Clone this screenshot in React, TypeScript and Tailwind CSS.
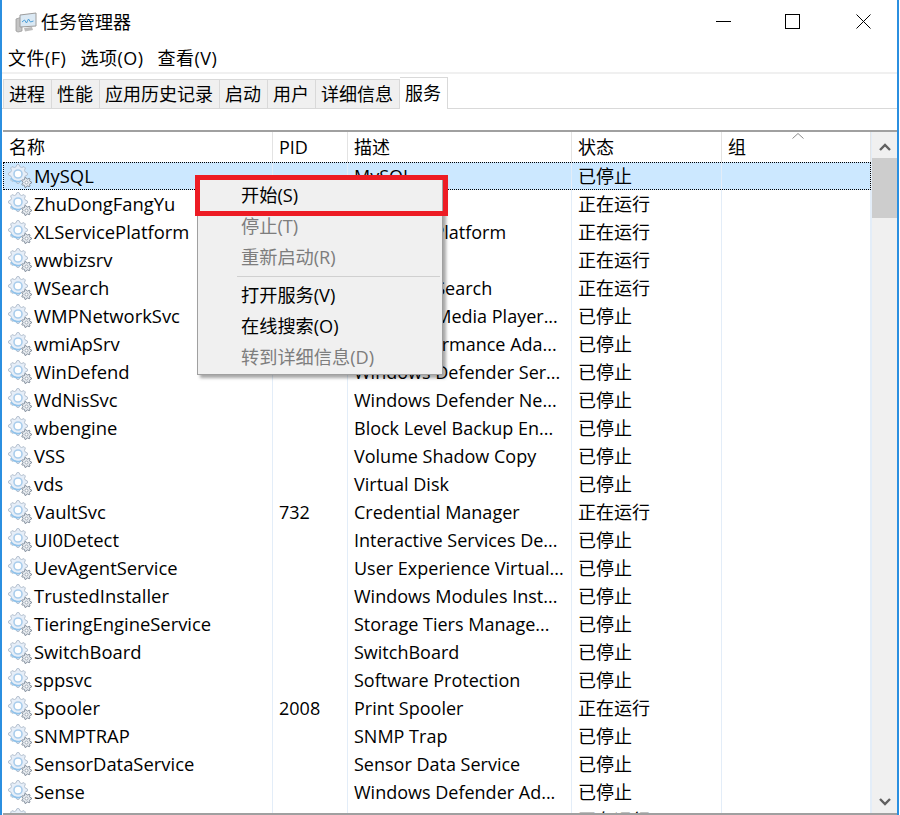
const font = "font-['Open_Sans','Noto_Sans_CJK_SC',sans-serif]"

type Row = {
  name: string
  pid?: string
  desc: string
  status: string
}

const STOPPED = "已停止"
const RUNNING = "正在运行"

const rows: Row[] = [
  { name: "MySQL", desc: "MySQL", status: STOPPED },
  { name: "ZhuDongFangYu", desc: "", status: RUNNING },
  { name: "XLServicePlatform", desc: "XLServicePlatform", status: RUNNING },
  { name: "wwbizsrv", desc: "", status: RUNNING },
  { name: "WSearch", desc: "Windows Search", status: RUNNING },
  { name: "WMPNetworkSvc", desc: "Windows Media Player...", status: STOPPED },
  { name: "wmiApSrv", desc: "WMI Performance Ada...", status: STOPPED },
  { name: "WinDefend", desc: "Windows Defender Ser...", status: STOPPED },
  { name: "WdNisSvc", desc: "Windows Defender Ne...", status: STOPPED },
  { name: "wbengine", desc: "Block Level Backup En...", status: STOPPED },
  { name: "VSS", desc: "Volume Shadow Copy", status: STOPPED },
  { name: "vds", desc: "Virtual Disk", status: STOPPED },
  { name: "VaultSvc", pid: "732", desc: "Credential Manager", status: RUNNING },
  { name: "UI0Detect", desc: "Interactive Services De...", status: STOPPED },
  { name: "UevAgentService", desc: "User Experience Virtual...", status: STOPPED },
  { name: "TrustedInstaller", desc: "Windows Modules Inst...", status: STOPPED },
  { name: "TieringEngineService", desc: "Storage Tiers Manage...", status: STOPPED },
  { name: "SwitchBoard", desc: "SwitchBoard", status: STOPPED },
  { name: "sppsvc", desc: "Software Protection", status: STOPPED },
  { name: "Spooler", pid: "2008", desc: "Print Spooler", status: RUNNING },
  { name: "SNMPTRAP", desc: "SNMP Trap", status: STOPPED },
  { name: "SensorDataService", desc: "Sensor Data Service", status: STOPPED },
  { name: "Sense", desc: "Windows Defender Ad...", status: STOPPED },
  { name: "sens", pid: "3340", desc: "System Event Notificat...", status: RUNNING },
]

const tabs = ["进程", "性能", "应用历史记录", "启动", "用户", "详细信息"]

// outline of a cog: alternating outer and inner radius
function gearPath(cx: number, cy: number, outer: number, inner: number, teeth: number) {
  const points: string[] = []
  const steps = teeth * 4
  for (let i = 0; i < steps; i++) {
    const r = i % 4 < 2 ? outer : inner
    const a = ((i - 0.5) / steps) * Math.PI * 2
    points.push(`${(cx + r * Math.cos(a)).toFixed(2)} ${(cy + r * Math.sin(a)).toFixed(2)}`)
  }
  return `M${points.join("L")}Z`
}

function GearIcon() {
  return (
    <svg viewBox="0 0 24 24" className="h-6 w-6 shrink-0">
      <path d={gearPath(10, 10, 9.5, 7.4, 8)} fill="#e6eef8" stroke="#b4c0cf" strokeWidth="1" />
      <circle cx="10" cy="10" r="4" fill="#ffffff" stroke="#a9cdec" strokeWidth="1.6" />
      <path d="M3 14a9 9 0 0 0 10 3" fill="none" stroke="#8fc2ea" strokeWidth="1.6" />
      <path d={gearPath(18.5, 18.5, 5, 3.6, 7)} fill="#e6eaef" stroke="#86929f" strokeWidth="1" />
      <circle cx="18.5" cy="18.5" r="1.5" fill="#ffffff" stroke="#86929f" strokeWidth="0.7" />
    </svg>
  )
}

function TaskManagerIcon() {
  return (
    <svg viewBox="0 0 22 22" className="h-[22px] w-[22px]">
      <path d="M1 8l6-2v14l-4 1-2-1z" fill="#c4c4c4" stroke="#9a9a9a" strokeWidth="0.8" />
      <path d="M5 4l16-2v13l-16 1z" fill="#dbe9f4" stroke="#9c9c9c" />
      <path d="M7 11l2.5-2 2 3 2-4 2 3 3-1" fill="none" stroke="#4d9fd8" strokeWidth="1" />
      <path d="M9 17l8-1 1 3-8 1.5z" fill="#bcbcbc" />
    </svg>
  )
}

function ServiceRow({ row, selected }: { row: Row; selected?: boolean }) {
  return (
    <div
      className={`grid h-7 shrink-0 grid-cols-[270px_75px_224px_150px_149px] items-center text-[18px] leading-7 text-black ${
        selected ? "bg-[#cce8ff] outline-1 -outline-offset-1 outline-dotted outline-black" : ""
      }`}
    >
      <div className="flex h-full items-center gap-[2px] overflow-hidden border-r border-[#e3edf8] pl-[5px] text-[18.4px]">
        <GearIcon />
        <span className="whitespace-nowrap">{row.name}</span>
      </div>
      <div className="h-full border-r border-[#e3edf8] pl-[6px]">{row.pid}</div>
      <div className="h-full overflow-hidden whitespace-nowrap border-r border-[#e3edf8] pl-[6px]">{row.desc}</div>
      <div className="h-full border-r border-[#e3edf8] pl-[6px]">{row.status}</div>
      <div className="h-full border-r border-[#e3edf8]" />
    </div>
  )
}

function MenuItem({ label, disabled }: { label: string; disabled?: boolean }) {
  return (
    <div className={`h-[31px] pl-[43px] leading-[31px] ${disabled ? "text-[#7d7d7d]" : "text-black"}`}>
      {label}
    </div>
  )
}

export default function App() {
  return (
    <div className={`${font} flex h-[815px] w-[899px] flex-col overflow-hidden border-x-2 border-x-[#2b8fe0] bg-white text-[18px]`}>
      <header className="flex h-[44px] shrink-0 items-center pl-[13px]">
        <TaskManagerIcon />
        <span className="ml-[4px] text-[18px] text-black">任务管理器</span>
        <div className="-mt-[2px] ml-auto flex items-center pr-[26px] text-black">
          <svg viewBox="0 0 15 15" className="h-[15px] w-[15px]">
            <path d="M0 7.5h15" stroke="currentColor" fill="none" />
          </svg>
          <svg viewBox="0 0 15 15" className="ml-[54px] h-[15px] w-[15px]">
            <rect x="0.5" y="0.5" width="14" height="14" stroke="currentColor" fill="none" />
          </svg>
          <svg viewBox="0 0 15 15" className="ml-[56px] h-[15px] w-[15px]">
            <path d="M0.5 0.5l14 14M14.5 0.5l-14 14" stroke="currentColor" fill="none" />
          </svg>
        </div>
      </header>

      <nav className="flex h-[28px] shrink-0 items-center gap-[14px] pl-[6px] tracking-[0.5px] text-black">
        <span>文件(F)</span>
        <span>选项(O)</span>
        <span>查看(V)</span>
      </nav>

      <div className="h-[2px] shrink-0 bg-[#f0f0f0]" />

      <div className="flex h-[35px] shrink-0 items-end border-b border-[#d9d9d9] pl-px">
        <div className="flex h-[29px] items-stretch">
          {tabs.map((tab) => (
            <div key={tab} className="-mb-px flex items-center border border-l-0 border-[#d9d9d9] bg-[#f0f0f0] pl-[5px] pr-[6px] first:border-l">
              {tab}
            </div>
          ))}
          <div className="-mb-px -mt-[2px] flex items-center border border-b-0 border-l-0 border-[#d9d9d9] bg-white pl-[5px] pr-[6px]">
            服务
          </div>
        </div>
      </div>

      <div className="h-[21px] shrink-0" />

      <div className="relative ml-px flex min-h-0 flex-1 flex-col border-y-2 border-y-[#a0a0a0]">
        <div className="grid h-[30px] shrink-0 grid-cols-[270px_75px_224px_150px_149px] items-center pr-[26px] text-[18px] text-black">
          <div className="h-full border-r border-[#e3e3e3] pl-[6px] leading-[30px]">名称</div>
          <div className="h-full border-r border-[#e3e3e3] pl-[6px] leading-[30px]">PID</div>
          <div className="h-full border-r border-[#e3e3e3] pl-[6px] leading-[30px]">描述</div>
          <div className="h-full border-r border-[#e3e3e3] pl-[6px] leading-[30px]">状态</div>
          <div className="h-full border-r border-[#e3e3e3] pl-[6px] leading-[30px]">组</div>
        </div>

        <div className="absolute left-[789px] top-px text-[#8a8a8a]">
          <svg viewBox="0 0 12 6" className="h-[6px] w-[12px]">
            <path d="M0.5 5.5L6 0.5l5.5 5" fill="none" stroke="currentColor" />
          </svg>
        </div>

        <div className="flex min-h-0 flex-1 flex-col overflow-hidden pr-[26px]">
          {rows.map((row, i) => (
            <ServiceRow key={row.name} row={row} selected={i === 0} />
          ))}
        </div>

        <div className="absolute bottom-0 right-0 top-0 flex w-[26px] flex-col items-center border-l border-[#e3edf8] bg-[#f0f0f0]">
          <svg viewBox="0 0 12 8" className="mt-[11px] h-2 w-3 text-[#606060]">
            <path d="M1 7l5-5 5 5" fill="none" stroke="currentColor" strokeWidth="2.4" />
          </svg>
          <div className="mt-[7px] h-[60px] w-full bg-[#cdcdcd]" />
          <svg viewBox="0 0 12 8" className="mb-[7px] mt-auto h-2 w-3 text-[#606060]">
            <path d="M1 1l5 5 5-5" fill="none" stroke="currentColor" strokeWidth="2.4" />
          </svg>
        </div>

        <div className="absolute left-[194px] top-[44px] w-[246px] border border-[#a0a0a0] bg-[#f0f0f0] pb-px pt-[3px] text-[18.2px] shadow-[3px_3px_3px_rgba(0,0,0,0.35)]">
          <MenuItem label="开始(S)" />
          <MenuItem label="停止(T)" disabled />
          <MenuItem label="重新启动(R)" disabled />
          <div className="my-[3px] ml-[39px] mr-[2px] h-px bg-[#d0d0d0]" />
          <MenuItem label="打开服务(V)" />
          <MenuItem label="在线搜索(O)" />
          <MenuItem label="转到详细信息(D)" disabled />
          <div className="absolute -left-[3px] -right-[6px] -top-[2px] h-[41px] border-[5px] border-[#ed1c24]" />
        </div>
      </div>
    </div>
  )
}
